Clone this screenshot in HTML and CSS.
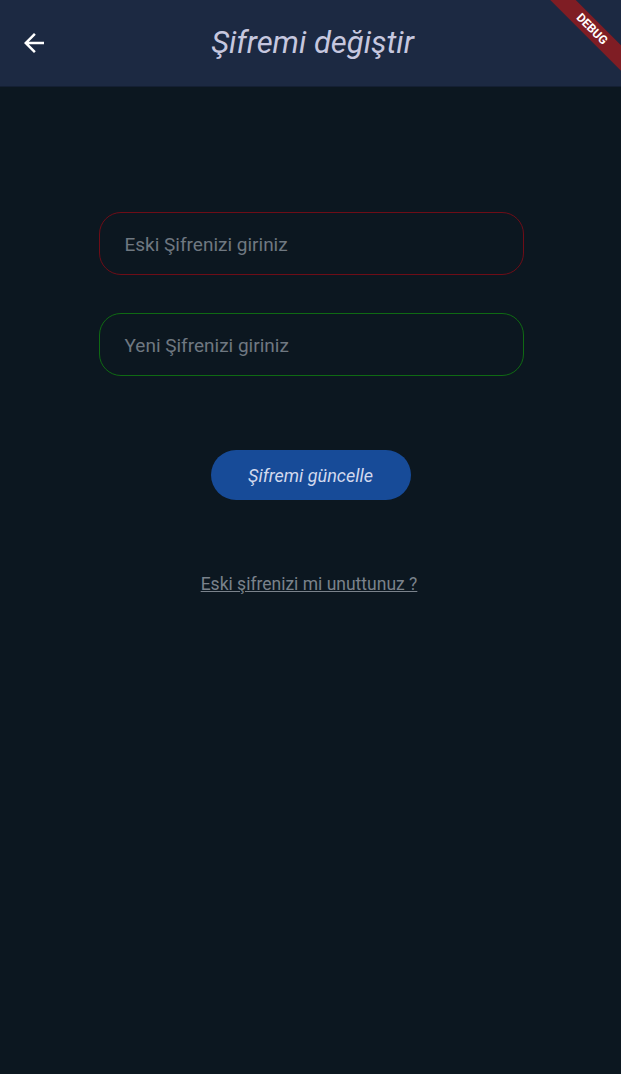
FILE: index.html
```html
<!DOCTYPE html>
<html lang="tr">
<head>
<meta charset="utf-8">
<link rel="stylesheet" href="styles.css">
</head>
<body>
<div class="screen">
  <header class="appbar">
    <button class="back" aria-label="Geri">
      <svg width="30" height="30" viewBox="0 0 24 24"><path fill="#ffffff" d="M20 11H7.83l5.59-5.59L12 4l-8 8 8 8 1.41-1.41L7.83 13H20v-2z"/></svg>
    </button>
    <h1 class="title">Şifremi değiştir</h1>
  </header>
  <main class="content">
    <div class="field field-old"><span class="hint">Eski Şifrenizi giriniz</span></div>
    <div class="field field-new"><span class="hint">Yeni Şifrenizi giriniz</span></div>
    <button class="update">Şifremi güncelle</button>
    <a class="forgot" href="#">Eski şifrenizi mi unuttunuz ?</a>
  </main>
  <div class="debug">DEBUG</div>
</div>
</body>
</html>
```
FILE: styles.css
```css
* { box-sizing: border-box; }
html, body { margin: 0; padding: 0; }
body {
  background: #0c1720;
  font-family: Roboto, "Noto Sans", sans-serif;
}
.screen {
  position: relative;
  width: 621px;
  height: 1074px;
  overflow: hidden;
  background: #0c1720;
}
.appbar {
  height: 87px;
  background: #1c2942;
  border-bottom: 1px solid #141f33;
  display: flex;
  align-items: center;
  position: relative;
}
.back {
  background: none;
  border: 0;
  padding: 0;
  margin-left: 19px;
  margin-bottom: 1px;
  width: 30px;
  height: 30px;
  display: flex;
}
.title {
  position: absolute;
  left: 0;
  right: 0;
  top: 0;
  bottom: 0;
  margin: 0;
  display: flex;
  align-items: center;
  justify-content: center;
  font-style: italic;
  font-weight: 400;
  font-size: 31px;
  color: #c6c7df;
  pointer-events: none;
  padding-left: 4px;
  padding-bottom: 1px;
}
.content {
  display: flex;
  flex-direction: column;
  align-items: center;
  padding-top: 125px;
}
.field {
  width: 425px;
  height: 63px;
  border-radius: 22px;
  border: 1px solid;
  display: flex;
  align-items: center;
  padding-left: 25px;
  padding-top: 1px;
  margin-left: 1px;
}
.field-old { border-color: #6e0d17; }
.field-new { border-color: #0f6a13; margin-top: 38px; }
.hint {
  font-size: 19px;
  color: #6f7881;
}
.update {
  margin-top: 74px;
  width: 200px;
  height: 50px;
  border: 0;
  border-radius: 25px;
  background: #174b98;
  color: #d2d9ee;
  font-family: Roboto, sans-serif;
  font-style: italic;
  font-size: 18px;
}
.forgot {
  margin-top: 74px;
  font-size: 17.5px;
  color: #7a828b;
  text-decoration: underline;
  margin-right: 3px;
}
.debug {
  position: absolute;
  left: 532px;
  top: 20px;
  width: 120px;
  height: 18px;
  background: #7f1d24;
  color: #ffffff;
  font-family: Roboto, sans-serif;
  font-weight: 700;
  font-size: 12px;
  line-height: 18px;
  text-align: center;
  transform: rotate(45deg);
}
```
